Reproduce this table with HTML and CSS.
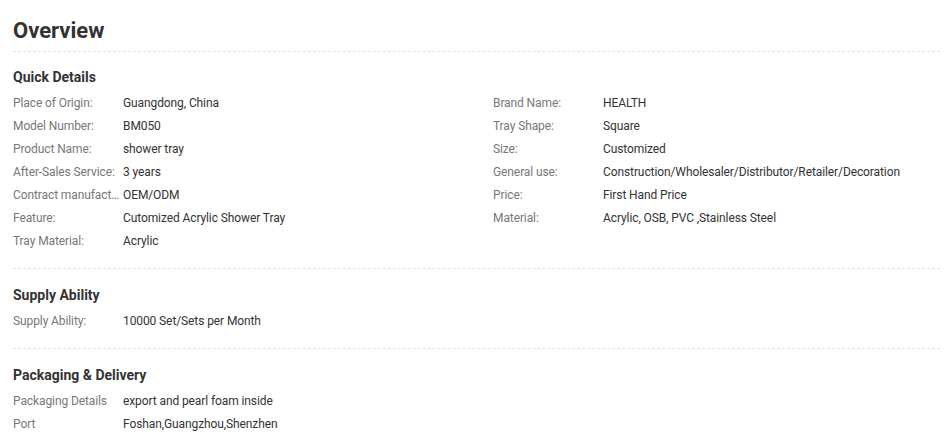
FILE: index.html
```html
<!DOCTYPE html>
<html>
<head>
<meta charset="utf-8">
<link rel="stylesheet" href="styles.css">
</head>
<body>
<div class="overview">
  <h1 class="title">Overview</h1>
  <section class="block first">
    <h2 class="block-title">Quick Details</h2>
    <div class="grid">
      <div class="row"><span class="label">Place of Origin:</span><span class="value">Guangdong, China</span></div>
      <div class="row"><span class="label">Brand Name:</span><span class="value">HEALTH</span></div>
      <div class="row"><span class="label">Model Number:</span><span class="value">BM050</span></div>
      <div class="row"><span class="label">Tray Shape:</span><span class="value">Square</span></div>
      <div class="row"><span class="label">Product Name:</span><span class="value">shower tray</span></div>
      <div class="row"><span class="label">Size:</span><span class="value">Customized</span></div>
      <div class="row"><span class="label">After-Sales Service:</span><span class="value">3 years</span></div>
      <div class="row"><span class="label">General use:</span><span class="value">Construction/Wholesaler/Distributor/Retailer/Decoration</span></div>
      <div class="row"><span class="label">Contract manufacturing:</span><span class="value">OEM/ODM</span></div>
      <div class="row"><span class="label">Price:</span><span class="value">First Hand Price</span></div>
      <div class="row"><span class="label">Feature:</span><span class="value">Cutomized Acrylic Shower Tray</span></div>
      <div class="row"><span class="label">Material:</span><span class="value">Acrylic, OSB, PVC ,Stainless Steel</span></div>
      <div class="row"><span class="label">Tray Material:</span><span class="value">Acrylic</span></div>
    </div>
  </section>
  <section class="block">
    <h2 class="block-title">Supply Ability</h2>
    <div class="grid">
      <div class="row"><span class="label">Supply Ability:</span><span class="value">10000 Set/Sets per Month</span></div>
    </div>
  </section>
  <section class="block last">
    <h2 class="block-title">Packaging &amp; Delivery</h2>
    <div class="list">
      <div class="row"><span class="label">Packaging Details</span><span class="value">export and pearl foam inside</span></div>
      <div class="row"><span class="label">Port</span><span class="value">Foshan,Guangzhou,Shenzhen</span></div>
    </div>
  </section>
</div>
</body>
</html>
```
FILE: styles.css
```css
html, body {
  margin: 0;
  padding: 0;
  background: #fff;
}
body {
  font-family: Roboto, "Liberation Sans", Arial, sans-serif;
  color: #333;
}
.overview {
  width: 927px;
  margin-left: 13px;
}
.title {
  margin: 0;
  font-size: 22px;
  font-weight: 700;
  line-height: 30px;
  padding-top: 16px;
  padding-bottom: 5px;
  border-bottom: 1px dashed #e2e2e2;
  color: #333;
}
.block {
  padding-top: 16px;
  padding-bottom: 15px;
  border-bottom: 1px dashed #e2e2e2;
}
.block.first {
  padding-top: 15px;
}
.block.last {
  border-bottom: none;
}
.block-title {
  margin: 0 0 5px;
  font-size: 14px;
  font-weight: 700;
  line-height: 20px;
  color: #333;
}
.grid {
  display: grid;
  grid-template-columns: 480px 447px;
}
.list {
  display: flex;
  flex-direction: column;
}
.row {
  display: flex;
  font-size: 12px;
  line-height: 23px;
  letter-spacing: -0.1px;
  white-space: nowrap;
}
.label {
  width: 110px;
  padding-right: 3px;
  box-sizing: border-box;
  flex: none;
  color: #777;
  overflow: hidden;
  text-overflow: ellipsis;
}
.value {
  color: #333;
}
```
